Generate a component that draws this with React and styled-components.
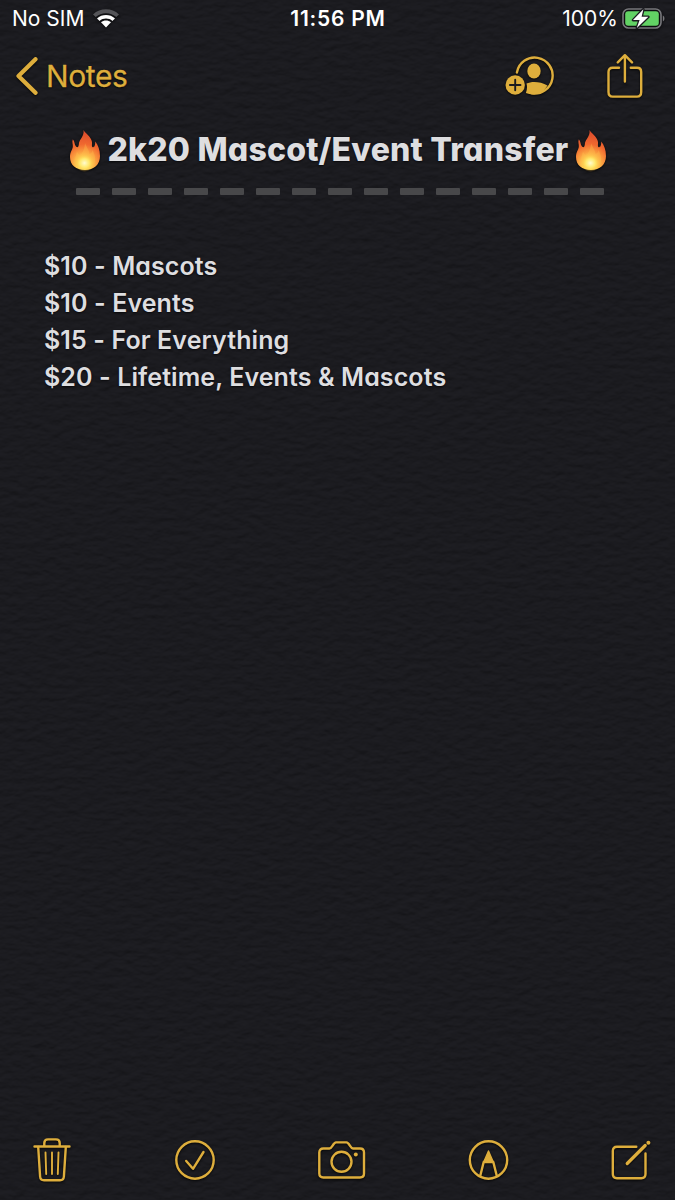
import React from "react";
import styled, { createGlobalStyle } from "styled-components";

const GlobalStyle = createGlobalStyle`
  * {
    box-sizing: border-box;
  }
  body {
    margin: 0;
    background: #1b1b1f;
    font-family: Inter, "Liberation Sans", sans-serif;
  }
`;

const Screen = styled.div`
  position: relative;
  display: flex;
  flex-direction: column;
  width: 675px;
  height: 1200px;
  overflow: hidden;
  isolation: isolate;
  color: #dedee0;
`;

const Texture = styled.svg`
  position: absolute;
  inset: 0;
  width: 100%;
  height: 100%;
  z-index: -1;
`;

const StatusBar = styled.div`
  display: grid;
  grid-template-columns: 1fr auto 1fr;
  align-items: center;
  height: 37px;
  padding: 0 11px 0 12px;
  color: #fff;
  font-size: 21px;
`;

const StatusGroup = styled.div`
  display: flex;
  align-items: center;
  justify-content: ${(props) => (props.$end ? "flex-end" : "flex-start")};
  gap: ${(props) => (props.$end ? "4px" : "8px")};
`;

const Label = styled.span`
  white-space: nowrap;
  letter-spacing: ${(props) => props.$spacing || "0"};
  font-weight: ${(props) => props.$weight || "inherit"};
`;

const NavBar = styled.div`
  display: flex;
  align-items: center;
  justify-content: space-between;
  height: 78px;
  padding: 0 32px 0 15px;
  color: #deae3c;
`;

const BackButton = styled.div`
  display: flex;
  align-items: center;
  gap: 8px;
  font-size: 30px;
  -webkit-text-stroke: 0.3px currentColor;
  text-shadow: 0 1px 2px #000;
`;

const NavActions = styled.div`
  display: flex;
  align-items: center;
  gap: 52px;
`;

const Icon = styled.svg`
  display: block;
  flex: none;
  overflow: visible;
  fill: none;
  stroke: currentColor;
  stroke-width: 2.4;
  stroke-linecap: round;
  stroke-linejoin: round;
  filter: drop-shadow(0 1px 1px rgba(0, 0, 0, 0.8));
`;

const Note = styled.div`
  flex: 1;
  font-feature-settings: "cv11";
  text-shadow: 0 1px 2px #08080a;
`;

const Title = styled.h1`
  display: flex;
  align-items: center;
  justify-content: center;
  gap: 6px;
  height: 69px;
  margin: 0;
  padding-left: 1px;
  font-size: 32px;
  font-weight: 800;
`;

const Divider = styled.div`
  display: flex;
  gap: 12px;
  margin: 4px 0 0 76px;
`;

const Dash = styled.span`
  width: 24px;
  height: 7px;
  border-radius: 1px;
  background: #48484a;
`;

const Prices = styled.div`
  margin: 52.7px 0 0 44px;
`;

const Price = styled.div`
  height: 37.2px;
  line-height: 37.2px;
  font-size: 25px;
  font-weight: 580;
  white-space: nowrap;
  letter-spacing: 0.1px;
`;

const Toolbar = styled.div`
  display: flex;
  align-items: center;
  justify-content: space-between;
  height: 80px;
  padding: 0 24px 0 33px;
  color: #deae3c;
`;

const prices = [
  "$10 - Mascots",
  "$10 - Events",
  "$15 - For Everything",
  "$20 - Lifetime, Events & Mascots",
];

function Paper() {
  return (
    <Texture aria-hidden="true">
      <filter id="grain" x="0" y="0" width="100%" height="100%" colorInterpolationFilters="sRGB">
        <feTurbulence type="fractalNoise" baseFrequency="0.08 0.15" numOctaves="3" seed="8" />
        <feColorMatrix values="0 0 0 0 0  0 0 0 0 0  0 0 0 0 0  1 0 0 0 0" />
        <feDiffuseLighting surfaceScale="0.9" diffuseConstant="1" lightingColor="#1f1f24">
          <feDistantLight azimuth="265" elevation="61" />
        </feDiffuseLighting>
      </filter>
      <rect width="100%" height="100%" filter="url(#grain)" />
    </Texture>
  );
}

function Flame({ id }) {
  return (
    <Icon width="32" height="40" viewBox="0 0 32 40">
      <defs>
        <radialGradient id={id} gradientUnits="userSpaceOnUse" cx="15" cy="34" r="32">
          <stop offset="0" stopColor="#fff7a2" />
          <stop offset="0.18" stopColor="#ffdf58" />
          <stop offset="0.38" stopColor="#fba040" />
          <stop offset="0.62" stopColor="#f0682f" />
          <stop offset="1" stopColor="#dc4c2c" />
        </radialGradient>
        <radialGradient id={id + "-core"}>
          <stop offset="0" stopColor="#fffbd0" />
          <stop offset="0.5" stopColor="#ffec70" stopOpacity="0.85" />
          <stop offset="1" stopColor="#ffb83e" stopOpacity="0" />
        </radialGradient>
      </defs>
      <path
        stroke="none"
        fill={`url(#${id})`}
        d="M14.5 0C16 3 22.5 7 23 12C23.2 14.4 22.5 16 23.4 17C24.6 18 26.4 16.6 26.2 11.6C29 15 31 20 31 26C31 34.5 25 40 16 40C7 40 1 35 1 27C1 22 3.3 20 3.8 17C4.1 14.5 2.8 12.5 3.7 9.6C5.8 11 5.3 14.5 7 16.5C8.6 18 9.6 16.8 9.8 14.5C10.1 9 15.5 6.5 14.5 0Z"
      />
      <path
        stroke="none"
        fill="#ffc14c"
        opacity="0.35"
        d="M16 13C18 18 20 20 20.5 24C22.8 23.4 23.4 21.6 23.5 20C26 25 27 29 25.5 33C23.8 37 20 38.5 16 38.5C10 38.5 6 35 6 30C6 26.5 7.4 24.5 7.8 22C9.4 22.8 9.8 24.4 10.8 25.5C13.8 23 15.8 18 16 13Z"
      />
      <ellipse cx="15.5" cy="33" rx="9.5" ry="9" stroke="none" fill={`url(#${id}-core)`} />
    </Icon>
  );
}

function App() {
  return (
    <>
      <GlobalStyle />
      <Screen>
        <Paper />
        <StatusBar>
          <StatusGroup>
            <Label>No SIM</Label>
            <Icon width="28" height="20" viewBox="0 0 28 20">
              <g stroke="none">
                <path fill="#545458" d="M1 5.4C8.2-1.4 19.8-1.4 27 5.4L24.3 8.1C18.6 2.8 9.4 2.8 3.7 8.1Z" />
                <path fill="#fff" d="M5 9.4C10 4.8 18 4.8 23 9.4L20.4 12C16.8 8.8 11.2 8.8 7.6 12Z" />
                <path fill="#fff" d="M9 13.3C11.8 10.8 16.2 10.8 19 13.3L14 18.5Z" />
              </g>
            </Icon>
          </StatusGroup>
          <Label $weight={600} $spacing="0.75px">11:56 PM</Label>
          <StatusGroup $end>
            <Label>100%</Label>
            <Icon width="42" height="22" viewBox="0 0 42 22">
              <rect x="1" y="1" width="38" height="19" rx="5.5" stroke="#78787c" style={{ strokeWidth: 1.6 }} />
              <rect x="3.2" y="3.2" width="33.6" height="14.6" rx="3" fill="#62d264" stroke="none" />
              <path d="M40.8 7.5C43 8.5 43 12.5 40.8 13.5Z" fill="#78787c" stroke="none" />
              <path
                d="M21.4 1.2L11 12.1H17.6L14.8 20L26.4 8.8H19.6Z"
                fill="#fff"
                stroke="#1b1b1f"
                style={{ strokeWidth: 2.6, paintOrder: "stroke" }}
              />
            </Icon>
          </StatusGroup>
        </StatusBar>
        <NavBar>
          <BackButton>
            <Icon width="23" height="38" viewBox="0 0 23 38">
              <path d="M20.5 2.2L3.5 19L20.5 35.8" style={{ strokeWidth: 4.2 }} />
            </Icon>
            <Label $spacing="-0.4px">Notes</Label>
          </BackButton>
          <NavActions>
            <Icon width="49" height="40" viewBox="0.5 0 49 40">
              <path d="M11.4 16.5A18 18 0 1 1 26 37.3" />
              <ellipse cx="28.5" cy="15" rx="6.7" ry="7.5" fill="currentColor" stroke="none" />
              <path
                d="M21 27.5C26 25 35 25.3 42 29.5C37 38 28 40 20.4 37C21.7 33.5 21.8 30.5 21 27.5Z"
                fill="currentColor"
                stroke="none"
              />
              <circle cx="9.7" cy="29" r="9.7" fill="currentColor" stroke="none" />
              <path d="M9.7 23.7V34.3M4.4 29H15" stroke="#1b1b1f" style={{ strokeWidth: 1.9 }} />
            </Icon>
            <Icon width="36" height="45" viewBox="0 0 36 45">
              <path d="M12 13.8H5.6Q1.5 13.8 1.5 17.9V38Q1.5 42.6 5.6 42.6H30Q34.2 42.6 34.2 38V17.9Q34.2 13.8 30 13.8H23.8" />
              <path d="M17.9 27.5V1.4M10.8 8.4L17.9 1.2L25 8.4" />
            </Icon>
          </NavActions>
        </NavBar>
        <Note>
          <Title>
            <Flame id="flame-left" />
            <Label $spacing="0.2px">2k20 Mascot/Event Transfer</Label>
            <Flame id="flame-right" />
          </Title>
          <Divider>
            {Array.from({ length: 15 }, (_, i) => (
              <Dash key={i} />
            ))}
          </Divider>
          <Prices>
            {prices.map((text) => (
              <Price key={text}>{text}</Price>
            ))}
          </Prices>
        </Note>
        <Toolbar>
          <Icon width="38" height="44" viewBox="0 0 38 44">
            <path d="M1.5 8.5H36.5M11.3 8V5Q11.3 1.4 15 1.4H23Q26.7 1.4 26.7 5V8" />
            <path d="M5.2 9L7.1 38.5Q7.4 42.3 11 42.3H27Q30.6 42.3 30.9 38.5L32.8 9" />
            <path d="M12.5 14.5L13.2 36M19 14.5V36M25.5 14.5L24.8 36" style={{ strokeWidth: 1.9 }} />
          </Icon>
          <Icon width="40" height="40" viewBox="-1 0 40 40">
            <circle cx="20" cy="20" r="18.7" />
            <path d="M11.2 21L18 28.8L28.5 12" />
          </Icon>
          <Icon width="48" height="38" viewBox="-1 0 48 38">
            <path d="M5.3 7.5H11.5C14 7.5 15.3 1.4 18 1.4H28.5C31.2 1.4 32.5 7.5 35 7.5H42Q46 7.5 46 11.5V32.5Q46 36.5 42 36.5H5.3Q1.3 36.5 1.3 32.5V11.5Q1.3 7.5 5.3 7.5Z" />
            <circle cx="23.5" cy="20.8" r="10" />
            <circle cx="37.8" cy="13.5" r="2" fill="currentColor" stroke="none" />
          </Icon>
          <Icon width="40" height="40" viewBox="-0.5 0 40 40">
            <circle cx="20" cy="20" r="18.7" />
            <path d="M11.7 36L15.2 22H24.8L28.3 36" />
            <path d="M20 11L24.8 22H15.2Z" fill="currentColor" style={{ strokeWidth: 1.4 }} />
          </Icon>
          <Icon width="40" height="40" viewBox="0 0 40 40">
            <path d="M25.3 6.8H6Q1.8 6.8 1.8 11V34Q1.8 38.2 6 38.2H30.3Q34.5 38.2 34.5 34V13.5" />
            <path d="M16.2 23.5L34.2 5.5" style={{ strokeWidth: 3.2 }} />
            <circle cx="37.4" cy="2.8" r="2" fill="currentColor" stroke="none" />
          </Icon>
        </Toolbar>
      </Screen>
    </>
  );
}

export default App;
